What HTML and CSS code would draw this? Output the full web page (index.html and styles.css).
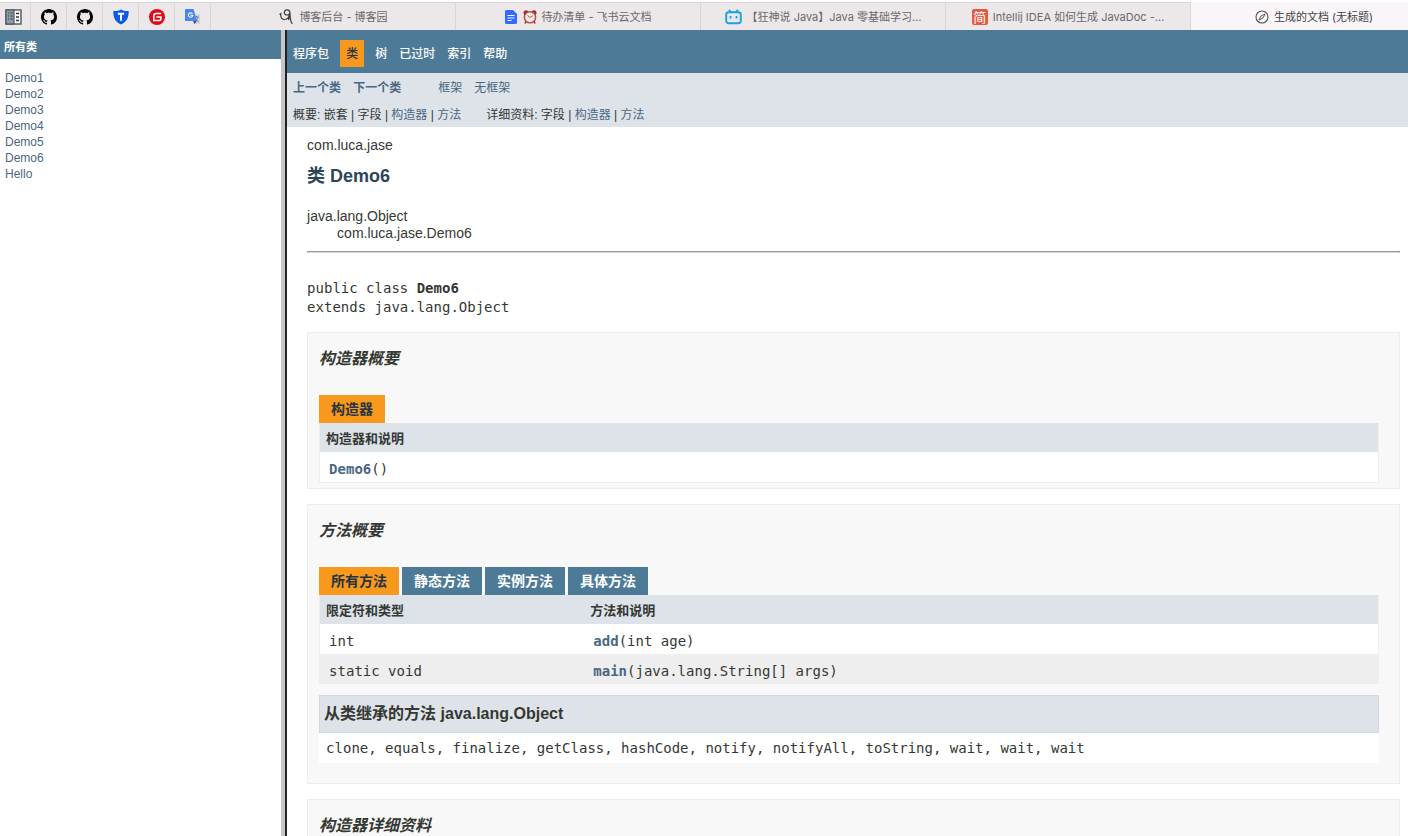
FILE: index.html
```html
<!DOCTYPE html>
<html lang="zh-CN">
<head>
<meta charset="utf-8">
<title>生成的文档 (无标题)</title>
<link rel="stylesheet" href="styles.css">
</head>
<body>
<div class="tabbar">
  <button class="pin pin-first" type="button" aria-label="侧边栏"><svg width="17" height="16" viewBox="0 0 17 16"><rect x="1" y="1" width="15" height="14" fill="#fff" stroke="#4d5860" stroke-width="1.4"/><rect x="1" y="1" width="8" height="14" fill="#8d9ca7" stroke="#4d5860" stroke-width="1.2"/><path d="M3 4h1M5.500 4h2M3 7h1M5.500 7h2M3 10h1M5.500 10h2" stroke="#333" stroke-width="1.200"/><path d="M11 4.500h3M11 8h3M11 11.500h3" stroke="#333" stroke-width="1.600"/></svg></button>
  <button class="pin" type="button" aria-label="GitHub"><svg width="16" height="16" viewBox="0 0 16 16"><path fill="#000" d="M8 0C3.580 0 0 3.580 0 8c0 3.540 2.290 6.530 5.470 7.590.4.070.55-.17.55-.38 0-.19-.01-.82-.01-1.490-2.010.37-2.530-.49-2.690-.94-.09-.23-.48-.94-.82-1.130-.28-.15-.68-.52-.01-.53.63-.01 1.080.58 1.230.82.72 1.210 1.870.87 2.330.66.07-.52.28-.87.51-1.070-1.780-.2-3.640-.89-3.640-3.950 0-.87.31-1.590.82-2.150-.08-.2-.36-1.020.08-2.120 0 0 .67-.21 2.200.82.64-.18 1.320-.27 2-.27s1.360.09 2 .27c1.530-1.040 2.200-.82 2.200-.82.44 1.100.16 1.920.08 2.120.51.56.82 1.270.82 2.150 0 3.070-1.870 3.750-3.650 3.950.29.25.54.73.54 1.480 0 1.070-.01 1.930-.01 2.200 0 .21.15.46.55.38A8.010 8.010 0 0 0 16 8c0-4.420-3.580-8-8-8z"/></svg></button>
  <button class="pin" type="button" aria-label="GitHub"><svg width="16" height="16" viewBox="0 0 16 16"><path fill="#000" d="M8 0C3.580 0 0 3.580 0 8c0 3.540 2.290 6.530 5.470 7.590.4.070.55-.17.55-.38 0-.19-.01-.82-.01-1.490-2.010.37-2.530-.49-2.690-.94-.09-.23-.48-.94-.82-1.130-.28-.15-.68-.52-.01-.53.63-.01 1.080.58 1.230.82.72 1.210 1.870.87 2.330.66.07-.52.28-.87.51-1.070-1.780-.2-3.640-.89-3.640-3.950 0-.87.31-1.590.82-2.150-.08-.2-.36-1.020.08-2.120 0 0 .67-.21 2.200.82.64-.18 1.320-.27 2-.27s1.360.09 2 .27c1.530-1.040 2.200-.82 2.200-.82.44 1.100.16 1.920.08 2.120.51.56.82 1.270.82 2.150 0 3.070-1.870 3.750-3.650 3.950.29.25.54.73.54 1.480 0 1.070-.01 1.930-.01 2.200 0 .21.15.46.55.38A8.010 8.010 0 0 0 16 8c0-4.420-3.580-8-8-8z"/></svg></button>
  <button class="pin" type="button" aria-label="T"><svg width="16" height="16" viewBox="0 0 16 16"><path fill="#0a5be8" d="M8 .5c2 1.300 5 1.700 7.700 1.500C15.800 9 13.500 13 8 15.500 2.500 13 .2 9 .3 2 3 2.200 6 1.800 8 .5z"/><path d="M4.800 4.800h6.400M8 4.800v7" stroke="#fff" stroke-width="2"/></svg></button>
  <button class="pin" type="button" aria-label="Gitee"><svg width="16" height="16" viewBox="0 0 16 16"><circle cx="8" cy="8" r="8" fill="#e00a14"/><path d="M12.300 4.500H7.200a2.400 2.400 0 0 0-2.400 2.400v4.600h5.400a1.700 1.700 0 0 0 1.700-1.700V8H7.300" fill="none" stroke="#fff" stroke-width="1.600"/></svg></button>
  <button class="pin" type="button" aria-label="翻译"><svg width="16" height="16" viewBox="0 0 16 16"><path d="M6 5h9v10H9z" fill="#d3d6da"/><path d="M9 8h5M11.500 7v1M13 8c-.5 2.500-2 4-3 4.500M10.500 9.500c.5 1.500 2 2.500 3 3" fill="none" stroke="#71858f"/><path d="M8 12l1.500 3L12 12z" fill="#3949ab"/><path d="M1 0h7.500L12 12H1a1 1 0 0 1-1-1V1a1 1 0 0 1 1-1z" fill="#4a86f0"/><path d="M7.400 4.700a2.200 2.200 0 1 0 .4 1.500H5.600" fill="none" stroke="#fff" stroke-width="1.100"/></svg></button>
  <button class="tab" type="button"><svg width="16" height="16" viewBox="0 0 16 16"><path d="M1.500 5.500l1.300-.8c-.3 3 .7 5.500 3.200 5.800 3.500.3 6-3 6-6.500C12 1.500 10.500.8 9 .8 7.300.8 6.300 2 6.300 3.500S7.500 6 9 6s2.700-.9 3-2.200c-.1 4 .3 8.200 2.200 11.200M11.500 8l-1.200 3" fill="none" stroke="#3a3a3a" stroke-width="1.200"/></svg><span>博客后台 - 博客园</span></button>
  <button class="tab" type="button"><svg width="14" height="16" viewBox="0 0 14 16"><path d="M2.500 1H9l4 4v8.500a1.500 1.500 0 0 1-1.500 1.500h-9A1.500 1.500 0 0 1 1 13.500v-11A1.500 1.500 0 0 1 2.500 1z" fill="#2f6bff"/><path d="M3.500 6.500h7M3.500 9h7M3.500 11.500h4" stroke="#fff" stroke-width="1.200"/></svg><span class="label"><svg width="14" height="14" viewBox="0 0 14 14"><path d="M3 11l-1 2.500M11 11l1 2.500" stroke="#8e2a2d" stroke-width="1.500"/><circle cx="3" cy="2.800" r="2.500" fill="#a52e32"/><circle cx="11" cy="2.800" r="2.500" fill="#a52e32"/><circle cx="7" cy="7.300" r="5.600" fill="#f1e9de" stroke="#b5484a" stroke-width="1.400"/><path d="M4.500 5.500L7 7.500l2.800-1.800" fill="none" stroke="#777"/></svg>待办清单 - 飞书云文档</span></button>
  <button class="tab" type="button"><svg width="17" height="16" viewBox="0 0 17 16"><path d="M4 .8l2 2.200M13 .8L11 3" stroke="#18a4e0" stroke-width="1.800"/><rect x="1.200" y="3.200" width="14.600" height="11" rx="2.500" fill="none" stroke="#18a4e0" stroke-width="1.900"/><path d="M5.500 7v2.500M11.500 7v2.500" stroke="#18a4e0" stroke-width="1.800"/></svg><span>【狂神说 Java】Java 零基础学习…</span></button>
  <button class="tab" type="button"><span class="jian">简</span><span>Intellij IDEA 如何生成 JavaDoc -…</span></button>
  <button class="tab tab-on" type="button"><svg width="14" height="14" viewBox="0 0 14 14"><circle cx="7" cy="7" r="6" fill="none" stroke="#555" stroke-width="1.100"/><path d="M10 4L8 8 4 10l2-4z" fill="none" stroke="#555"/></svg><span>生成的文档 (无标题)</span></button>
</div>
<div class="frames">
  <aside class="classes">
    <h1 class="bar">所有类</h1>
    <ul class="class-list">
      <li><a href="#">Demo1</a></li>
      <li><a href="#">Demo2</a></li>
      <li><a href="#">Demo3</a></li>
      <li><a href="#">Demo4</a></li>
      <li><a href="#">Demo5</a></li>
      <li><a href="#">Demo6</a></li>
      <li><a href="#">Hello</a></li>
    </ul>
  </aside>
  <main class="doc">
    <nav class="topnav">
      <a href="#">程序包</a><a class="current" href="#">类</a><a href="#">树</a><a href="#">已过时</a><a href="#">索引</a><a href="#">帮助</a>
    </nav>
    <nav class="subnav">
      <div class="links"><a class="strong" href="#">上一个类</a><a class="strong" href="#">下一个类</a><a class="apart" href="#">框架</a><a href="#">无框架</a></div>
      <div class="links second"><span>概要: 嵌套 | 字段 | <a href="#">构造器</a> | <a href="#">方法</a></span><span>详细资料: 字段 | <a href="#">构造器</a> | <a href="#">方法</a></span></div>
    </nav>
    <div class="content">
      <div class="package">com.luca.jase</div>
      <h2 class="title">类 Demo6</h2>
      <ul class="tree"><li>java.lang.Object</li><li class="child">com.luca.jase.Demo6</li></ul>
      <hr class="rule">
      <pre class="signature">public class <b>Demo6</b>
extends java.lang.Object</pre>
      <section class="block">
        <h3 class="heading">构造器概要</h3>
        <div class="tabs"><span class="cap cap-on">构造器</span></div>
        <table class="members">
          <thead><tr><th>构造器和说明</th></tr></thead>
          <tbody><tr><td><a href="#">Demo6</a>()</td></tr></tbody>
        </table>
      </section>
      <section class="block methods">
        <h3 class="heading">方法概要</h3>
        <div class="tabs"><button class="cap cap-on" type="button">所有方法</button><button class="cap" type="button">静态方法</button><button class="cap" type="button">实例方法</button><button class="cap" type="button">具体方法</button></div>
        <table class="members">
          <thead><tr><th class="kind">限定符和类型</th><th>方法和说明</th></tr></thead>
          <tbody>
            <tr><td>int</td><td><a href="#">add</a>(int age)</td></tr>
            <tr class="alt"><td>static void</td><td><a href="#">main</a>(java.lang.String[] args)</td></tr>
          </tbody>
        </table>
        <h3 class="inherited">从类继承的方法 java.lang.Object</h3>
        <code class="names">clone, equals, finalize, getClass, hashCode, notify, notifyAll, toString, wait, wait, wait</code>
      </section>
      <section class="block">
        <h3 class="heading">构造器详细资料</h3>
      </section>
    </div>
  </main>
</div>
</body>
</html>
```
FILE: styles.css
```css
* { box-sizing: border-box; }
body {
  margin: 0;
  height: 100vh;
  display: flex;
  flex-direction: column;
  overflow: hidden;
  background: #fff;
  color: #353833;
  font: 14px/17px "Liberation Sans", "Noto Sans CJK SC", sans-serif;
}
a { color: #4a6782; text-decoration: none; }
ul { list-style: none; margin: 0; padding: 0; }
button { border: 0; margin: 0; padding: 0; font: inherit; }

.tabbar {
  display: flex;
  flex: none;
  height: 30px;
  border-top: 2px solid #fff;
  background: #ece7e9;
}
.pin, .tab {
  display: flex;
  align-items: center;
  justify-content: center;
  background: #ece7e9;
  border-top: 1px solid #dad5d7;
  border-right: 1px solid #d9d4d6;
}
.pin { flex: none; width: 36px; }
.pin-first { width: 31px; padding-right: 4px; }
.tab {
  flex: 1 1 0;
  min-width: 0;
  gap: 5px;
  color: #6b686a;
  font: 11px/16px Inter, "Noto Sans CJK SC", sans-serif;
  white-space: nowrap;
}
.label { display: flex; align-items: center; gap: 4px; }
.tab-on {
  flex: 0 0 217px;
  padding-left: 30px;
  background: #f9f5f8;
  border-color: #f9f5f8;
  color: #444;
}
.jian {
  width: 16px;
  border-radius: 2px;
  background: #e25a44;
  color: #fff;
  font-size: 13px;
}

.frames { display: flex; flex: 1; min-height: 0; }
.classes {
  flex: none;
  width: 20.25%;
  border-right: 4px solid #c6c6c6;
}
.bar {
  margin: 0;
  height: 29px;
  padding: 9px 4px 3px;
  background: #4d7a97;
  color: #fff;
  font-size: 11px;
  line-height: 17px;
}
.class-list { padding: 11px 5px; font-size: 12px; line-height: 16px; }

.doc {
  flex: 1;
  min-width: 0;
  overflow: hidden;
  border-left: 2px solid #222;
}
.topnav {
  display: flex;
  align-items: center;
  height: 43px;
  padding-top: 4px;
  background: #4d7a97;
  font-size: 12px;
}
.topnav a { padding: 6px 6px 4px; color: #fff; font-weight: 500; }
.topnav .current { margin: 0 5px; background: #f8981d; color: #253441; }
.subnav {
  height: 54px;
  padding: 6px 6px 0;
  background: #dee3e9;
  font-size: 12px;
}
.links { display: flex; gap: 12px; line-height: 18px; }
.second { gap: 25px; padding-top: 9px; }
.strong { font-weight: 700; }
.apart { margin-left: 25px; }

.content { padding: 10px 8px 0 20px; }
.title {
  margin: 11px 0 0;
  color: #2c4557;
  font-size: 18px;
  line-height: 22px;
}
.tree { padding-top: 21px; }
.child { padding-left: 30px; }
.rule {
  margin: 9px 0 0;
  border: 1px solid #9a9a9a;
  border-bottom-color: #d8d8d8;
}
.signature {
  margin: 26px 0 15px;
  font: 14px/19px "DejaVu Sans Mono", monospace;
}
.block {
  margin-bottom: 15px;
  padding: 0 20px 5px 11px;
  border: 1px solid #ededed;
  background: #f8f8f8;
}
.methods { padding-bottom: 20px; }
.heading {
  margin: 0;
  padding: 15px 0 25px;
  font-size: 16px;
  font-style: italic;
  line-height: 22px;
}
.tabs { display: flex; gap: 3px; }
.cap {
  padding: 0 12px;
  background: #4d7a97;
  color: #fff;
  font-size: 14px;
  font-weight: 700;
  line-height: 28px;
}
.cap-on { background: #f8981d; color: #253441; }
.members {
  width: 100%;
  border: 1px solid #eee;
  border-top: 0;
  border-collapse: collapse;
  background: #fff;
}
.members th {
  padding: 7px 6px 4px;
  background: #dee3e9;
  font-size: 13px;
  line-height: 18px;
  text-align: left;
}
.members td {
  height: 30px;
  padding: 6px 9px 0;
  font: 14px/19px "DejaVu Sans Mono", monospace;
}
.members .kind { width: 25%; }
.members a { font-weight: 700; }
.alt { background: #eeeeef; }
.inherited {
  margin: 11px 0 0;
  padding: 7px 4px;
  border: 1px solid #d0d9e0;
  background: #dee3e9;
  font-size: 16px;
  line-height: 22px;
}
.names {
  display: block;
  padding: 6px 7px 5px;
  background: #fff;
  font: 14px/19px "DejaVu Sans Mono", monospace;
}
```
